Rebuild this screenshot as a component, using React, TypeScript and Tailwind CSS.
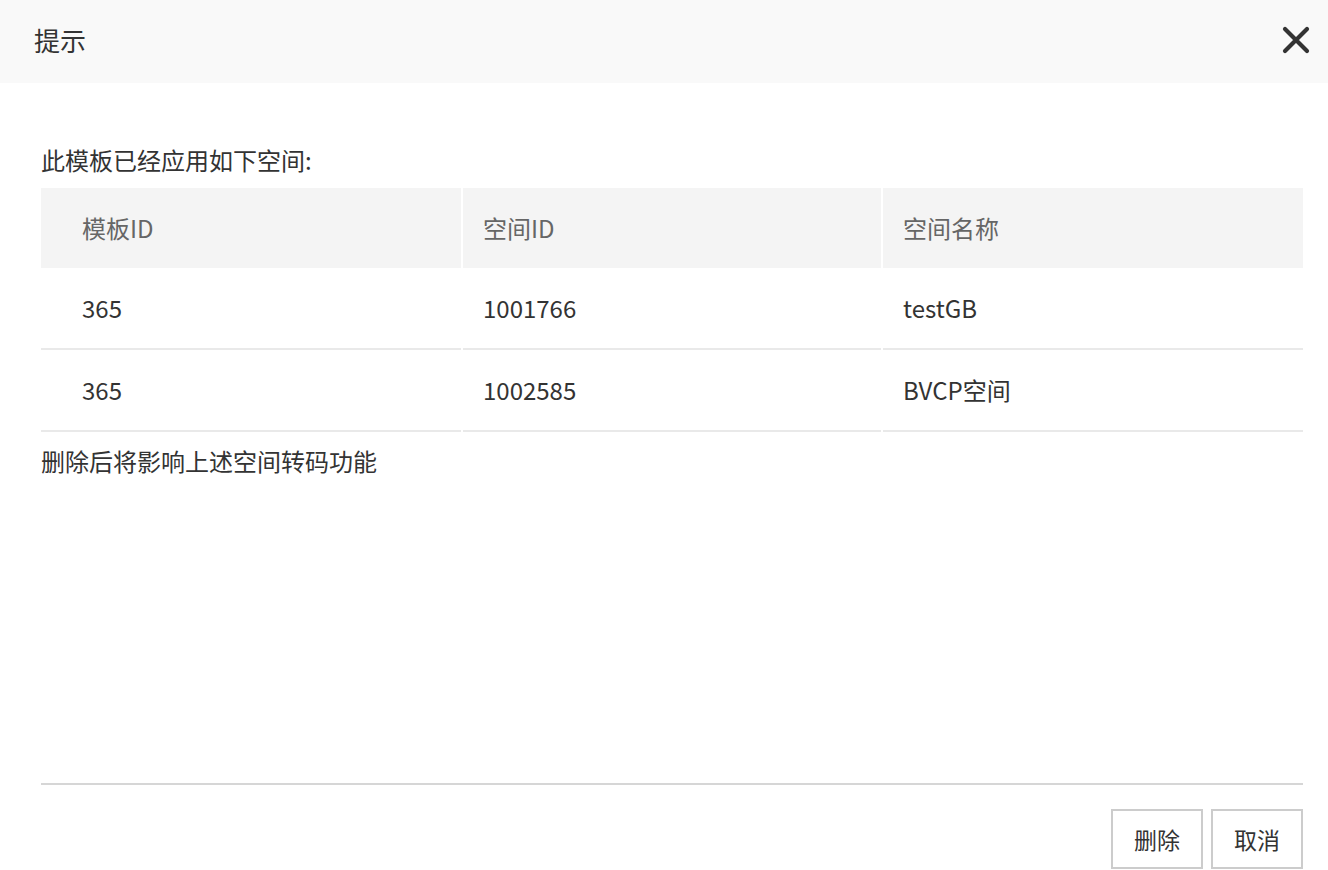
const font = { fontFamily: '"Noto Sans CJK SC", "Noto Sans", sans-serif' }

type Row = { templateId: string; spaceId: string; spaceName: string }

const rows: Row[] = [
  { templateId: '365', spaceId: '1001766', spaceName: 'testGB' },
  { templateId: '365', spaceId: '1002585', spaceName: 'BVCP空间' },
]

const headers = ['模板ID', '空间ID', '空间名称']

function CloseIcon() {
  return (
    <svg width="28" height="28" viewBox="0 0 28 28" fill="none">
      <path d="M3 3 L25 25 M25 3 L3 25" stroke="#333" strokeWidth="4.2" strokeLinecap="round" />
    </svg>
  )
}

// first column is indented further than the others
const cellPad = (j: number) => (j === 0 ? 'pl-[41px]' : 'pl-[20px]')

export default function App() {
  return (
    <div className="h-[870px] w-[1328px] bg-white flex flex-col overflow-hidden text-[#333]" style={font}>
      <header className="h-[83px] shrink-0 bg-[#f9f9f9] flex items-start justify-between pl-[34px] pr-[18px] pt-[24px]">
        <h1 className="text-[26px] leading-[32px] text-[#333]">提示</h1>
        <button className="w-[28px] h-[28px] mt-[2px] flex items-center justify-center">
          <CloseIcon />
        </button>
      </header>

      <main className="flex-1 pl-[41px] pr-[25px] pt-[60px]">
        <p className="text-[24px] leading-[34px]">此模板已经应用如下空间:</p>
        <div className="mt-[11px] grid grid-cols-[420px_418px_420px] gap-x-[2px]">
          {headers.map((h, j) => (
            <div key={h} className={`h-[80px] bg-[#f4f4f4] flex items-center ${cellPad(j)} text-[24px] text-[#666]`}>
              {h}
            </div>
          ))}
          {rows.map((r, i) => (
            <div key={i} className="contents">
              {[r.templateId, r.spaceId, r.spaceName].map((v, j) => (
                <div
                  key={j}
                  className={`h-[82px] border-b-2 border-[#e9e9e9] flex items-center ${cellPad(j)} text-[24px] text-[#333]`}
                >
                  {v}
                </div>
              ))}
            </div>
          ))}
        </div>
        <p className="mt-[12px] text-[24px] leading-[34px]">删除后将影响上述空间转码功能</p>
      </main>

      <footer className="shrink-0 pl-[41px] pr-[25px]">
        <div className="border-t-2 border-[#d6d6d6]" />
        <div className="flex justify-end gap-[8px] pt-[24px] pb-px">
          <button className="w-[92px] h-[60px] border-2 border-[#cccccc] bg-white text-[23px] text-[#333]">删除</button>
          <button className="w-[92px] h-[60px] border-2 border-[#cccccc] bg-white text-[23px] text-[#333]">取消</button>
        </div>
      </footer>
    </div>
  )
}
